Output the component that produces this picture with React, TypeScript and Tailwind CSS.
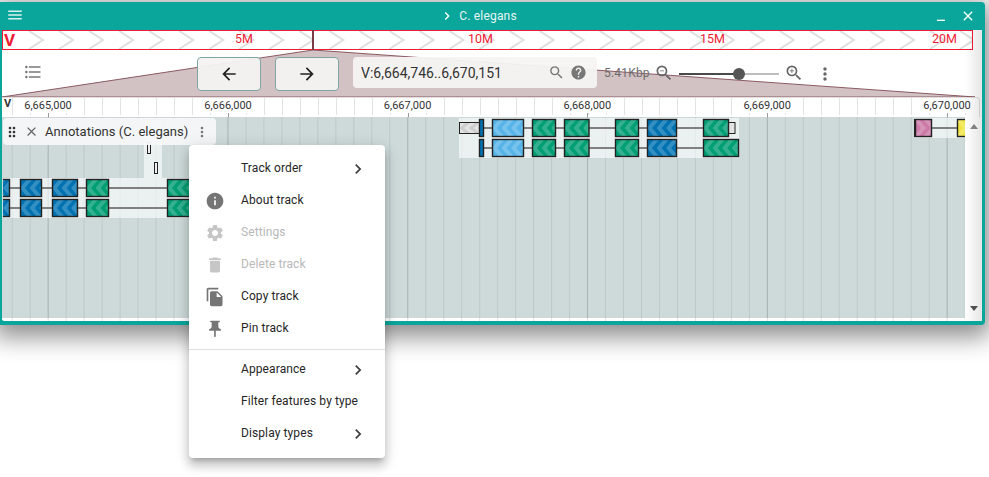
import type { ReactNode } from "react";
import {
  MdArrowBack,
  MdArrowForward,
  MdChevronRight,
  MdClose,
  MdDelete,
  MdDragIndicator,
  MdFileCopy,
  MdFormatListBulleted,
  MdHelp,
  MdInfo,
  MdMenu,
  MdMinimize,
  MdMoreVert,
  MdPushPin,
  MdSearch,
  MdSettings,
  MdZoomIn,
  MdZoomOut,
} from "react-icons/md";

const GREEN = "#009e73";
const BLUE = "#0072b2";
const SKY = "#56b4e9";
const PINK = "#cc79a7";
const YELLOW = "#f0e442";
const GRAY = "#e4e4e4";

type Box = { x: number; w: number; c: string };
type Row = { y: number; from: number; to: number; boxes: Box[]; dir?: "l" | "r" };

const rows: Row[] = [
  {
    y: 119.5,
    from: 479,
    to: 728,
    boxes: [
      { x: 459.5, w: 20, c: GRAY },
      { x: 479.5, w: 4, c: BLUE },
      { x: 492.5, w: 31, c: SKY },
      { x: 532.5, w: 23, c: GREEN },
      { x: 564.5, w: 24.5, c: GREEN },
      { x: 615.5, w: 23, c: GREEN },
      { x: 647.5, w: 29, c: BLUE },
      { x: 728.5, w: 6.5, c: GRAY },
      { x: 703.5, w: 25, c: GREEN },
    ],
  },
  {
    y: 139.5,
    from: 479,
    to: 710,
    boxes: [
      { x: 479.5, w: 4, c: BLUE },
      { x: 492.5, w: 31, c: SKY },
      { x: 532.5, w: 23, c: GREEN },
      { x: 564.5, w: 24.5, c: GREEN },
      { x: 615.5, w: 23, c: GREEN },
      { x: 647.5, w: 29, c: BLUE },
      { x: 703.5, w: 35, c: GREEN },
    ],
  },
  {
    y: 179.5,
    from: 3,
    to: 190,
    boxes: [
      { x: -6, w: 15.5, c: BLUE },
      { x: 20.5, w: 21, c: BLUE },
      { x: 52.5, w: 25, c: BLUE },
      { x: 86.5, w: 22, c: GREEN },
      { x: 167.5, w: 30, c: GREEN },
    ],
  },
  {
    y: 199.5,
    from: 3,
    to: 190,
    boxes: [
      { x: -6, w: 15.5, c: BLUE },
      { x: 20.5, w: 21, c: BLUE },
      { x: 52.5, w: 25, c: BLUE },
      { x: 86.5, w: 22, c: GREEN },
      { x: 167.5, w: 30, c: GREEN },
    ],
  },
  {
    y: 119.5,
    from: 931,
    to: 958,
    dir: "r",
    boxes: [
      { x: 915.5, w: 16, c: PINK },
      { x: 957.5, w: 20, c: YELLOW },
    ],
  },
];

const minorTicks = Array.from({ length: 54 }, (_, i) => 12.2 + i * 17.98);
const labels = [
  [48, "6,665,000"],
  [228, "6,666,000"],
  [407.6, "6,667,000"],
  [587.4, "6,668,000"],
  [767.2, "6,669,000"],
  [947, "6,670,000"],
] as const;

function Feature({ box, y, dir }: { box: Box; y: number; dir: "l" | "r" }) {
  // UTR boxes are drawn thinner than the coding exons
  const utr = box.c === GRAY;
  const top = utr ? y + 3 : y;
  const h = utr ? 11 : 17;
  const marks = [];
  for (let x = 2; x < box.w + 4; x += 9.6) {
    marks.push(
      <polyline
        key={x}
        points={dir === "l" ? `${x + 8},-1 ${x},${h / 2} ${x + 8},${h + 1}` : `${x - 2},-1 ${x + 6},${h / 2} ${x - 2},${h + 1}`}
        fill="none"
        stroke={utr ? "#000" : "#fff"}
        strokeOpacity={utr ? 0.09 : 0.2}
        strokeWidth={utr ? 3 : 4}
      />,
    );
  }
  return (
    <g>
      <svg x={box.x} y={top} width={box.w} height={h}>
        <rect width={box.w} height={h} fill={box.c} />
        {box.w > 8 && marks}
      </svg>
      <rect x={box.x} y={top} width={box.w} height={h} fill="none" stroke="#222" strokeWidth={utr ? 1 : 1.4} />
    </g>
  );
}

function TrackCanvas() {
  return (
    <svg width={963} height={204} viewBox="2 117 963 204" className="block">
      <rect x={2} y={117} width={963} height={201} fill="#cddad9" />
      <rect x={2} y={318} width={963} height={3} fill="#fff" />
      {minorTicks.map((x, i) => (
        <g key={x}>
          <line x1={x} x2={x} y1={117} y2={318} stroke={i % 10 === 2 ? "#a3b2b1" : "#bccac9"} />
          <line x1={x} x2={x} y1={318} y2={321} stroke="#e2e2e2" />
        </g>
      ))}
      <g fill="#fff" fillOpacity={0.6}>
        <rect x={459} y={118} width={280} height={40} />
        <rect x={3} y={178} width={187} height={40} />
        <rect x={144} y={118} width={18} height={60} />
        <rect x={915} y={118} width={50} height={20} />
      </g>
      <rect x={144.5} y={119.5} width={17} height={16} fill="#f1f4f4" stroke="#bbb" />
      <rect x={147.5} y={142.5} width={3} height={11} fill="#eee" stroke="#222" />
      <rect x={154.5} y={162.5} width={3} height={11} fill="#eee" stroke="#222" />
      <svg x={3} y={118} width={962} height={110}>
        <g transform="translate(-3 -118)">
          {rows.map((row) => (
            <g key={`${row.y}-${row.from}`}>
              <line x1={row.from} x2={row.to} y1={row.y + 8.5} y2={row.y + 8.5} stroke="#808080" strokeWidth={2} />
              {row.boxes.map((box) => (
                <Feature key={box.x} box={box} y={row.y} dir={row.dir ?? "l"} />
              ))}
            </g>
          ))}
          <rect x={914} y={119} width={2} height={18} fill="#222" />
        </g>
      </svg>
    </svg>
  );
}

function OverviewChevrons() {
  return (
    <svg width={969} height={18} className="absolute top-0 left-0">
      {Array.from({ length: 33 }, (_, i) => {
        const tip = 43 - 3 + i * 30.03;
        return <polyline key={i} points={`${tip - 14},0 ${tip},9 ${tip - 14},18`} fill="none" stroke="#dfdfdf" strokeWidth={2} />;
      })}
    </svg>
  );
}

function MenuItem({ icon, label, arrow, off }: { icon?: ReactNode; label: string; arrow?: boolean; off?: boolean }) {
  return (
    <div className={`flex h-8 items-center pr-[17px] pl-4 ${off ? "text-[#b8b8b8]" : "text-[#262626]"}`}>
      <div className={`flex w-9 shrink-0 items-center ${off ? "text-[#c6c6c6]" : "text-[#757575]"}`}>{icon}</div>
      <span className="flex-1 -translate-y-px text-xs tracking-[0.1px]">{label}</span>
      {arrow && <MdChevronRight size={20} className="text-[#3c3c3c]" />}
    </div>
  );
}

export default function App() {
  return (
    <div className="relative h-[477px] overflow-hidden bg-white pt-[2px] font-['Roboto',sans-serif]">
      <div className="relative flex h-[323px] w-[985px] flex-col rounded-tr-[4px] rounded-br-[4px] bg-[#0aa69b] shadow-[0_6px_24px_6px_rgba(0,0,0,0.45)]">
        <div className="relative flex h-7 shrink-0 items-center justify-center pr-[29px] text-white">
          <MdMenu size={18} className="absolute top-[4px] left-[6px] opacity-85" />
          <div className="flex items-center">
            <MdChevronRight size={16} className="mr-[4px]" />
            <span className="text-xs tracking-[0.2px] opacity-90">C. elegans</span>
          </div>
          <MdMinimize size={16} className="absolute top-[5px] right-[36px]" />
          <MdClose size={16} className="absolute top-[6px] right-[9px]" />
        </div>

        <div className="relative mr-[3px] ml-[2px] flex-1 overflow-hidden rounded-bl-[3px] bg-white">
          <div className="relative flex h-5 w-[971px] border border-[#ee1c35] text-[12.5px] leading-[16px] text-[#ee1c35]">
            <OverviewChevrons />
            <span className="absolute top-[-1px] left-[1px] text-[17px] leading-[20px] font-bold">V</span>
            <span className="absolute left-[232px]">5M</span>
            <span className="absolute left-[465px]">10M</span>
            <span className="absolute left-[697px]">15M</span>
            <span className="absolute left-[929px]">20M</span>
            <div className="absolute top-[-1px] left-[309px] h-5 w-[2px] bg-[#7a3b46]" />
          </div>

          <div className="relative flex h-[47px] items-start pt-[7px]">
            <svg width={974} height={47} viewBox="2 50 974 47" className="absolute top-0 left-0">
              <polygon points="313,50 975,97 2,97" fill="#d3c2c4" stroke="#8a5a63" strokeWidth={1} />
            </svg>
            <MdFormatListBulleted size={20} className="relative mt-[5px] ml-[21px] text-[#7a7a7a]" />
            <button className="relative ml-[154px] flex h-[34px] w-16 items-center justify-center rounded border border-[#7fa5a2] bg-[#f4f3f2]/95 text-[#222]">
              <MdArrowBack size={20} />
            </button>
            <button className="relative ml-[14px] flex h-[34px] w-16 items-center justify-center rounded border border-[#7fa5a2] bg-[#f4f3f2]/95 text-[#222]">
              <MdArrowForward size={20} />
            </button>
            <div className="relative ml-[14px] flex h-[31px] w-[244px] items-center rounded bg-[#f5f4f3]/95 pr-[10px] pl-2 text-[#777]">
              <span className="flex-1 text-sm text-[#333]">V:6,664,746..6,670,151</span>
              <MdSearch size={17} className="mr-[5px]" />
              <MdHelp size={17} />
            </div>
            <span className="relative mt-[8px] ml-[7px] text-xs tracking-[0.2px] text-[#6b6b6b]">5.41Kbp</span>
            <MdZoomOut size={20} className="relative mt-[6px] ml-[4px] text-[#666]" />
            <div className="relative mt-[16px] ml-[5px] flex h-[2px] w-[100px] items-center bg-[#bdbdbd]">
              <div className="h-[2px] w-[60px] bg-[#4a4a4a]" />
              <div className="-ml-[6px] h-3 w-3 rounded-full bg-[#555]" />
            </div>
            <MdZoomIn size={20} className="relative mt-[6px] ml-[5px] text-[#666]" />
            <MdMoreVert size={20} className="relative mt-[7px] ml-[11px] text-[#666]" />
          </div>

          <div className="relative h-5 w-[978px] overflow-hidden rounded-tr-[4px] border-t border-r border-[#dedede] bg-white text-[11px] text-[#333]">
            {minorTicks.map((x) => (
              <div key={x} className="absolute top-0 bottom-[2px] w-px bg-[#e3e3e3]" style={{ left: x - 2 }} />
            ))}
            {labels.map(([x, text]) => (
              <div key={text}>
                <div className="absolute bottom-0 h-[5px] w-px bg-[#9a9a9a]" style={{ left: x - 2 }} />
                <span className="absolute top-0 -translate-x-1/2 bg-white px-[2px] leading-[15px]" style={{ left: x - 2 }}>
                  {text}
                </span>
              </div>
            ))}
            <span className="absolute top-0 left-[2px] text-[11px] leading-[12px] font-bold">V</span>
          </div>

          <div className="relative flex">
            <TrackCanvas />
            <div className="flex w-[17px] flex-col items-center justify-between pt-[7px] pb-[10px]">
              <div className="h-0 w-0 border-x-[4.5px] border-b-[5px] border-x-transparent border-b-[#8a8a8a]" />
              <div className="h-0 w-0 border-x-[4.5px] border-t-[5px] border-x-transparent border-t-[#555]" />
            </div>
            <div className="absolute top-[1px] left-[1px] flex h-[27px] w-[213px] items-center rounded bg-[#f5f7f8]/95 text-[#333]">
              <MdDragIndicator size={16} className="ml-[1px] text-[#333]" />
              <MdClose size={15} className="ml-[4px] text-[#666]" />
              <span className="ml-[6px] text-[13px] tracking-[0.02px]">Annotations (C. elegans)</span>
              <MdMoreVert size={16} className="ml-[6px] text-[#777]" />
            </div>
          </div>
          <div className="pointer-events-none absolute top-0 right-0 bottom-0 w-[17px] bg-linear-to-r from-black/0 to-black/10" />
        </div>
        <div className="h-1 shrink-0" />
      </div>

      <div className="absolute top-[145px] left-[189px] w-[196px] rounded bg-white py-2 shadow-[0_5px_5px_-3px_rgba(0,0,0,0.2),0_8px_10px_1px_rgba(0,0,0,0.14),0_3px_14px_2px_rgba(0,0,0,0.12)]">
        <MenuItem label="Track order" arrow />
        <MenuItem label="About track" icon={<MdInfo size={20} />} />
        <MenuItem label="Settings" off icon={<MdSettings size={20} />} />
        <MenuItem label="Delete track" off icon={<MdDelete size={20} />} />
        <MenuItem label="Copy track" icon={<MdFileCopy size={20} />} />
        <MenuItem label="Pin track" icon={<MdPushPin size={20} />} />
        <div className="my-1 h-px bg-[#e0e0e0]" />
        <MenuItem label="Appearance" arrow />
        <MenuItem label="Filter features by type" />
        <MenuItem label="Display types" arrow />
      </div>
    </div>
  );
}
